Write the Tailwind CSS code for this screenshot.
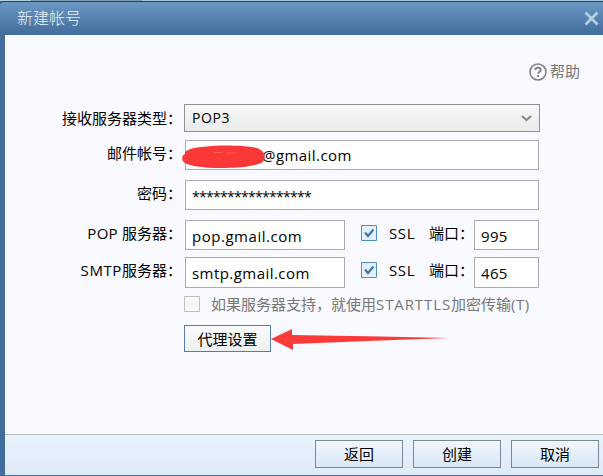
<!DOCTYPE html>
<html lang="zh-CN">
<head>
<meta charset="utf-8">
<title>新建帐号</title>
<script src="https://cdn.jsdelivr.net/npm/@tailwindcss/browser@4"></script>
</head>
<body class="w-[603px] h-[476px] overflow-hidden bg-[#416c9b] font-['Open_Sans','Noto_Sans_CJK_SC',sans-serif] text-[15px] leading-[20px] text-black whitespace-nowrap">
<div class="w-[603px] h-[476px] flex flex-col">
  <div class="h-px flex shrink-0"><div class="w-[31px] bg-[#b4cbdd]"></div><div class="w-[111px] bg-[#8199ac]"></div><div class="flex-1 bg-[#a9c7dc]"></div></div>
  <header class="h-[34px] shrink-0 rounded-tl-[4px] border-t border-[#25435f] bg-linear-to-b from-[#6d98c4] to-[#416c9b] flex items-center justify-between pl-[17px] pr-[4px]">
    <h1 class="pb-[2px] text-[16px] font-light text-[#e6f2fc]">新建帐号</h1>
    <svg class="w-[15px] h-[15px]" viewBox="0 0 15 15" fill="none" stroke="#b9cfe4" stroke-width="2.6"><path d="M1.5 1.5 13.5 13.5M13.5 1.5 1.5 13.5"/></svg>
  </header>
  <div class="ml-[5px] flex-1 flex flex-col bg-[#f9faff]">
    <main class="h-[399px] flex flex-col">
      <div class="mt-[27px] h-[20px] flex items-center justify-end pr-[23px] gap-[3px] text-[#777]">
        <svg class="w-[18px] h-[18px]" viewBox="0 0 18 18" fill="none" stroke="#808080"><circle cx="9" cy="9" r="8" stroke-width="1.6"/><path d="M6.3 7.1C6.3 3.8 11.7 3.8 11.7 6.9 11.7 8.7 9.1 8.7 9.1 10.8M9.1 12v2" stroke-width="1.9"/></svg>
        <span class="pb-[2px]">帮助</span>
      </div>
      <div class="mt-[22px] h-[28px] flex">
        <label class="w-[179px] pt-[4px] text-right pr-[2px]">接收服务器类型：</label>
        <div class="w-[356px] h-[28px] border border-[#929292] bg-linear-to-b from-[#f7f7f7] to-[#e9eceb] flex items-center justify-between pl-[7px] pr-[7px] text-[14px]"><span class="tracking-[0.6px]">POP3</span>
          <svg class="w-[11px] h-[7px]" viewBox="0 0 11 7" fill="none" stroke="#8b8b8b" stroke-width="2.2"><path d="M1 1 5.5 5 10 1"/></svg>
        </div>
      </div>
      <div class="mt-[8px] h-[30px] flex">
        <label class="w-[180px] pt-[3px] text-right pr-[3px]">邮件帐号：</label>
        <div class="relative w-[354px] h-[30px] border border-[#acacac] bg-white flex items-center pl-[76px]"><span class="tracking-[0.45px]">@gmail.com</span>
          <svg class="absolute -left-[5px] top-[3px] w-[86px] h-[26px]" viewBox="0 0 86 26"><path fill="#fa3838" d="M4 10C3 5 16 3 31 2 48 1 67 2 76 4 85 7 86 16 80 19 71 23 56 24 39 24 22 24 11 22 6 20 0 18 0 12 4 10Z"/><path d="M32 8.5h10M46 9h9" stroke="#ff5a58" stroke-width="1"/></svg>
        </div>
      </div>
      <div class="mt-[10px] h-[30px] flex">
        <label class="w-[180px] pt-[3px] text-right pr-[3px]">密码：</label>
        <div class="w-[354px] h-[30px] border border-[#acacac] bg-white pl-[6px] pt-[6px] text-[14px] tracking-[-0.71px]">*****************</div>
      </div>
      <div class="mt-[10px] h-[30px] flex">
        <label class="w-[180px] pt-[3px] text-right pr-[3px]"><span class="tracking-[0.25px]">POP </span>服务器：</label>
        <div class="w-[160px] h-[30px] border border-[#acacac] bg-white pl-[6px] pt-[5px] tracking-[0.53px]">pop.gmail.com</div>
        <svg class="ml-[16px] mt-[5px] w-[16px] h-[16px]" viewBox="0 0 16 16"><path d="M.5.5h15v15H.5z" fill="#e4effa" stroke="#4d8fc4"/><path d="M4 7.5 7 11 12.5 4.5" fill="none" stroke="#3d79af" stroke-width="2.2"/></svg>
        <span class="ml-[12px] w-[40px] pt-[3px] tracking-[0.6px]">SSL</span>
        <label class="w-[45px] pt-[3px]">端口：</label>
        <div class="w-[65px] h-[30px] border border-[#acacac] bg-white pl-[6px] pt-[5px] tracking-[0.3px]">995</div>
      </div>
      <div class="mt-[7px] h-[31px] flex">
        <label class="w-[180px] pt-[3px] text-right pr-[3px]"><span class="tracking-[0.6px]">SMTP</span>服务器：</label>
        <div class="w-[160px] h-[31px] border border-[#acacac] bg-white pl-[6px] pt-[5px] tracking-[0.45px]">smtp.gmail.com</div>
        <svg class="ml-[16px] mt-[5px] w-[16px] h-[16px]" viewBox="0 0 16 16"><path d="M.5.5h15v15H.5z" fill="#e4effa" stroke="#4d8fc4"/><path d="M4 7.5 7 11 12.5 4.5" fill="none" stroke="#3d79af" stroke-width="2.2"/></svg>
        <span class="ml-[12px] w-[40px] pt-[3px] tracking-[0.6px]">SSL</span>
        <label class="w-[45px] pt-[3px]">端口：</label>
        <div class="w-[65px] h-[31px] border border-[#acacac] bg-white pl-[6px] pt-[5px] tracking-[0.3px]">465</div>
      </div>
      <div class="mt-[6px] h-[20px] ml-[179px] flex items-center text-[#777]">
        <span class="w-[16px] h-[16px] border border-[#c2c2c2] bg-[#f7f7f7]"></span>
        <span class="ml-[11px]">如果服务器支持，就使用<span class="tracking-[0.9px]">STARTTLS</span>加密传输<span class="tracking-[0.5px]">(T)</span></span>
      </div>
      <div class="mt-[11px] h-[27px] ml-[179px] flex items-center">
        <button class="w-[87px] h-[27px] border border-[#557fa8] bg-linear-to-b from-[#fafbfb] to-[#edf0f1] flex items-center justify-center">代理设置</button>
        <svg class="w-[180px] h-[24px]" viewBox="0 0 180 24"><path fill="#fb3a3a" d="M0 12 21 2V8L110 9.6 178 11 110 13.5 22 17V23Z"/></svg>
      </div>
    </main>
    <footer class="h-[41px] border-t border-[#b5bfca] bg-linear-to-b from-[#e8f3fc] to-[#deebf6] flex gap-[10px] justify-end pt-[5px] pr-[4px]">
      <button class="w-[88px] h-[28px] border border-[#7c8792] bg-linear-to-b from-[#f0f7fd] to-[#d8e7f5] flex items-center justify-center">返回</button>
      <button class="w-[88px] h-[28px] border border-[#7c8792] bg-linear-to-b from-[#f0f7fd] to-[#d8e7f5] flex items-center justify-center">创建</button>
      <button class="w-[88px] h-[28px] border border-[#7c8792] bg-linear-to-b from-[#f0f7fd] to-[#d8e7f5] flex items-center justify-center">取消</button>
    </footer>
  </div>
  <div class="h-px shrink-0 bg-[#416c9b]"></div>
</div>
</body>
</html>
